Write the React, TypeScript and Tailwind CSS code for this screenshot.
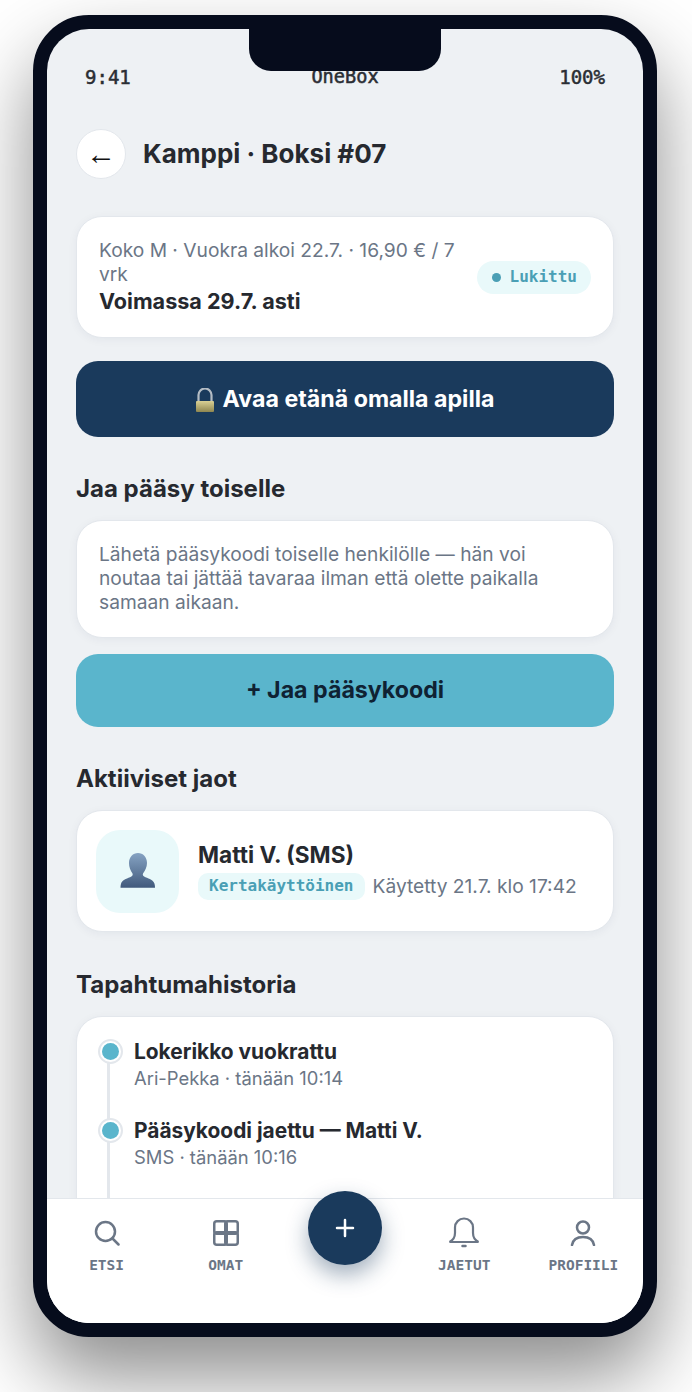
import React from "react";

const inter = "font-['Inter',sans-serif]";
const mono = "font-['DejaVu_Sans_Mono',monospace]";

function LockIcon() {
  return (
    <svg width="18" height="24" viewBox="0 0 18 24" className="shrink-0">
      <defs>
        <linearGradient id="lk" x1="0" y1="0" x2="0" y2="1">
          <stop offset="0" stopColor="#d9d094" />
          <stop offset="1" stopColor="#8f8650" />
        </linearGradient>
      </defs>
      <path d="M2.500 14V7a6.500 6.500 0 0 1 13 0v7" fill="none" stroke="#b4bcc4" strokeWidth="2.200" />
      <rect x="0" y="13" width="18" height="11" rx="1" fill="url(#lk)" />
    </svg>
  );
}

function PersonIcon() {
  return (
    <svg width="36" height="36" viewBox="0 0 36 36">
      <defs>
        <linearGradient id="pr" x1="0" y1="0" x2="0" y2="1">
          <stop offset="0" stopColor="#86a3c3" />
          <stop offset="1" stopColor="#415a7c" />
        </linearGradient>
      </defs>
      <path
        d="M18 0c5 0 9 4 9 10 0 4-2 8-4 10.500-.8 1.500.5 3 2.500 3.800 4 1.500 8 3 9 6.500.4 1.500.5 2.700.5 4H.5c0-1.300.1-2.500.5-4 1-3.500 5-5 9-6.500 2-.8 3.300-2.300 2.500-3.800C10.500 18 9 14 9 10 9 4 13 0 18 0z"
        fill="url(#pr)"
      />
    </svg>
  );
}

function SearchIcon() {
  return (
    <svg width="26" height="26" viewBox="0 0 26 26" fill="none" stroke="#6b7686" strokeWidth="2.500" strokeLinecap="round">
      <circle cx="11.500" cy="11.500" r="9.500" />
      <path d="M18.500 18.500 24.500 24.500" />
    </svg>
  );
}

function GridIcon() {
  return (
    <svg width="26" height="26" viewBox="0 0 26 26" fill="none" stroke="#6b7686" strokeWidth="2.500">
      <rect x="1.250" y="1.250" width="12.500" height="12.500" rx="2.500" />
      <rect x="12.250" y="1.250" width="12.500" height="12.500" rx="2.500" />
      <rect x="1.250" y="12.250" width="12.500" height="12.500" rx="2.500" />
      <rect x="12.250" y="12.250" width="12.500" height="12.500" rx="2.500" />
    </svg>
  );
}

function BellIcon() {
  return (
    <svg width="32" height="32" viewBox="0 0 32 32" fill="none" stroke="#6b7686" strokeWidth="2.200" strokeLinecap="round">
      <path d="M1.500 25c3-1.500 5.500-4 5.500-9v-5.500a9 9 0 0 1 18 0V16c0 5 2.500 7.500 5.500 9z" />
      <path d="M14.500 29h3" strokeWidth="2.500" />
    </svg>
  );
}

function UserIcon() {
  return (
    <svg width="26" height="26" viewBox="0 0 26 26" fill="none" stroke="#6b7686" strokeWidth="2.500" strokeLinecap="round">
      <circle cx="13" cy="7.500" r="6" />
      <path d="M2 25c1-5.500 5.500-8 11-8s10 2.500 11 8" />
    </svg>
  );
}

function NavItem({ icon, label }: { icon: React.ReactNode; label: string }) {
  return (
    <div className="flex flex-col items-center">
      <div className="h-[32px] flex items-center justify-center">{icon}</div>
      <div className={`${mono} mt-[7px] text-[14.500px] leading-[18px] font-bold text-[#6b7686]`}>{label}</div>
    </div>
  );
}

function Heading({ children, className = "" }: { children: React.ReactNode; className?: string }) {
  return (
    <h2 className={`${inter} text-[24px] leading-[28px] pt-px font-bold text-[#26292f] ${className}`}>{children}</h2>
  );
}

function Card({ children, className = "" }: { children: React.ReactNode; className?: string }) {
  return (
    <div className={`bg-white rounded-[26px] border border-[#e3e7ec] shadow-[0_2px_10px_rgba(20,40,70,0.05)] ${className}`}>
      {children}
    </div>
  );
}

function TimelineItem({ title, sub }: { title: string; sub: string }) {
  return (
    <div className="relative flex pl-[57px] h-[79px]">
      <div className="absolute left-[30px] top-[9px] bottom-[-9px] w-[3px] bg-[#e3e7ec]" />
      <div className="absolute left-[21px] top-0 w-[25px] h-[25px] rounded-full bg-white border-2 border-[#e3e7ec] flex items-center justify-center">
        <div className="w-[17px] h-[17px] rounded-full bg-[#5ab5cc]" />
      </div>
      <div>
        <div className={`${inter} text-[20.900px] leading-[26px] font-bold text-[#26292f]`}>{title}</div>
        <div className={`${inter} text-[18.400px] leading-[26px] text-[#6b7686]`}>{sub}</div>
      </div>
    </div>
  );
}

export default function App() {
  return (
    <div className="w-[692px] h-[1392px] bg-white overflow-hidden pt-[15px] pl-[33px]">
      <div className="w-[624px] h-[1322px] rounded-[56px] border-[14px] border-[#060c1c] bg-[#060c1c] shadow-[0_40px_80px_rgba(0,0,0,0.45)]">
        <div className="relative w-full h-full rounded-[42px] overflow-hidden bg-[#eef1f4]">
          <div className="absolute left-[202px] top-0 w-[192px] h-[42px] rounded-b-[22px] bg-[#060c1c] z-20" />

          <div className="flex flex-col px-[29px] pt-[36px]">
            <div className={`${mono} flex justify-between px-[9px] text-[19px] leading-[24px] text-[#2a2d33] [-webkit-text-stroke:0.5px_#2a2d33]`}>
              <span>9:41</span>
              <span className="text-[18.600px]">OneBox</span>
              <span>100%</span>
            </div>

            <div className="flex items-center gap-[17px] mt-[40px]">
              <div className="w-[50px] h-[50px] rounded-full bg-white border border-[#e3e7ec] flex items-center justify-center text-[30px] leading-none text-[#111] font-['Liberation_Sans',sans-serif]">
                ←
              </div>
              <h1 className={`${inter} text-[26px] leading-[34px] font-bold text-[#26292f]`}>Kamppi · Boksi #07</h1>
            </div>

            <Card className="mt-[37px] h-[122px] flex items-center justify-between pl-[22px] pr-[22px]">
              <div className={`${inter} w-[364px] text-[19.200px] leading-[24px] text-[#6b7686]`}>
                Koko M · Vuokra alkoi 22.7. · 16,90 € / 7 vrk
                <div className="text-[21.600px] leading-[31px] font-bold text-[#26292f]">Voimassa 29.7. asti</div>
              </div>
              <div className={`${mono} h-[33px] pl-[15px] pr-[14px] rounded-full bg-[#e9f9fa] flex items-center gap-[9px] text-[16px] font-bold text-[#4a9fb5]`}>
                <span className="w-[9px] h-[9px] rounded-full bg-[#4a9fb5]" />
                Lukittu
              </div>
            </Card>

            <button className={`${inter} mt-[23px] h-[76px] pt-px rounded-[22px] bg-[#1a3a5c] flex items-center justify-center gap-[9px] text-[23.200px] font-bold text-white`}>
              <LockIcon />
              Avaa etänä omalla apilla
            </button>

            <Heading className="mt-[37px]">Jaa pääsy toiselle</Heading>

            <Card className={`${inter} mt-[17px] h-[118px] px-[22px] pt-[21px] text-[19.200px] leading-[24px] text-[#6b7686]`}>
              Lähetä pääsykoodi toiselle henkilölle — hän voi noutaa tai jättää tavaraa ilman että olette paikalla samaan aikaan.
            </Card>

            <button className={`${inter} mt-[16px] h-[73px] rounded-[22px] bg-[#5ab5cc] flex items-center justify-center text-[23.200px] font-bold text-[#0f2233]`}>
              + Jaa pääsykoodi
            </button>

            <Heading className="mt-[37px]">Aktiiviset jaot</Heading>

            <Card className="mt-[17px] h-[122px] flex items-center gap-[19px] pl-[19px]">
              <div className="w-[83px] h-[83px] rounded-[24px] bg-[#e9f9fa] flex items-center justify-center">
                <PersonIcon />
              </div>
              <div>
                <div className={`${inter} text-[22.600px] leading-[28px] font-bold text-[#26292f]`}>Matti V. (SMS)</div>
                <div className="flex items-center gap-[8px] mt-[3px]">
                  <span className={`${mono} h-[27px] px-[11px] rounded-[10px] bg-[#e9f9fa] flex items-center text-[16px] font-bold text-[#4a9fb5]`}>
                    Kertakäyttöinen
                  </span>
                  <span className={`${inter} text-[19.200px] text-[#6b7686]`}>Käytetty 21.7. klo 17:42</span>
                </div>
              </div>
            </Card>

            <Heading className="mt-[38px]">Tapahtumahistoria</Heading>

            <Card className="mt-[17px] pt-[22px] h-[400px]">
              <TimelineItem title="Lokerikko vuokrattu" sub="Ari-Pekka · tänään 10:14" />
              <TimelineItem title="Pääsykoodi jaettu — Matti V." sub="SMS · tänään 10:16" />
            </Card>
          </div>

          <nav className="absolute left-0 right-0 bottom-0 h-[125px] bg-white border-t border-[#e3e7ec] grid grid-cols-5 pt-[18px] z-10">
            <NavItem icon={<SearchIcon />} label="ETSI" />
            <NavItem icon={<GridIcon />} label="OMAT" />
            <div className="flex justify-center">
              <div className="w-[74px] h-[74px] mt-[-26px] rounded-full bg-[#1a3a5c] flex items-center justify-center shadow-[0_10px_22px_rgba(26,58,92,0.4)]">
                <svg width="20" height="20" viewBox="0 0 20 20" stroke="#fff" strokeWidth="2.500" strokeLinecap="round">
                  <path d="M10 2v16M2 10h16" />
                </svg>
              </div>
            </div>
            <NavItem icon={<BellIcon />} label="JAETUT" />
            <NavItem icon={<UserIcon />} label="PROFIILI" />
          </nav>
        </div>
      </div>
    </div>
  );
}
